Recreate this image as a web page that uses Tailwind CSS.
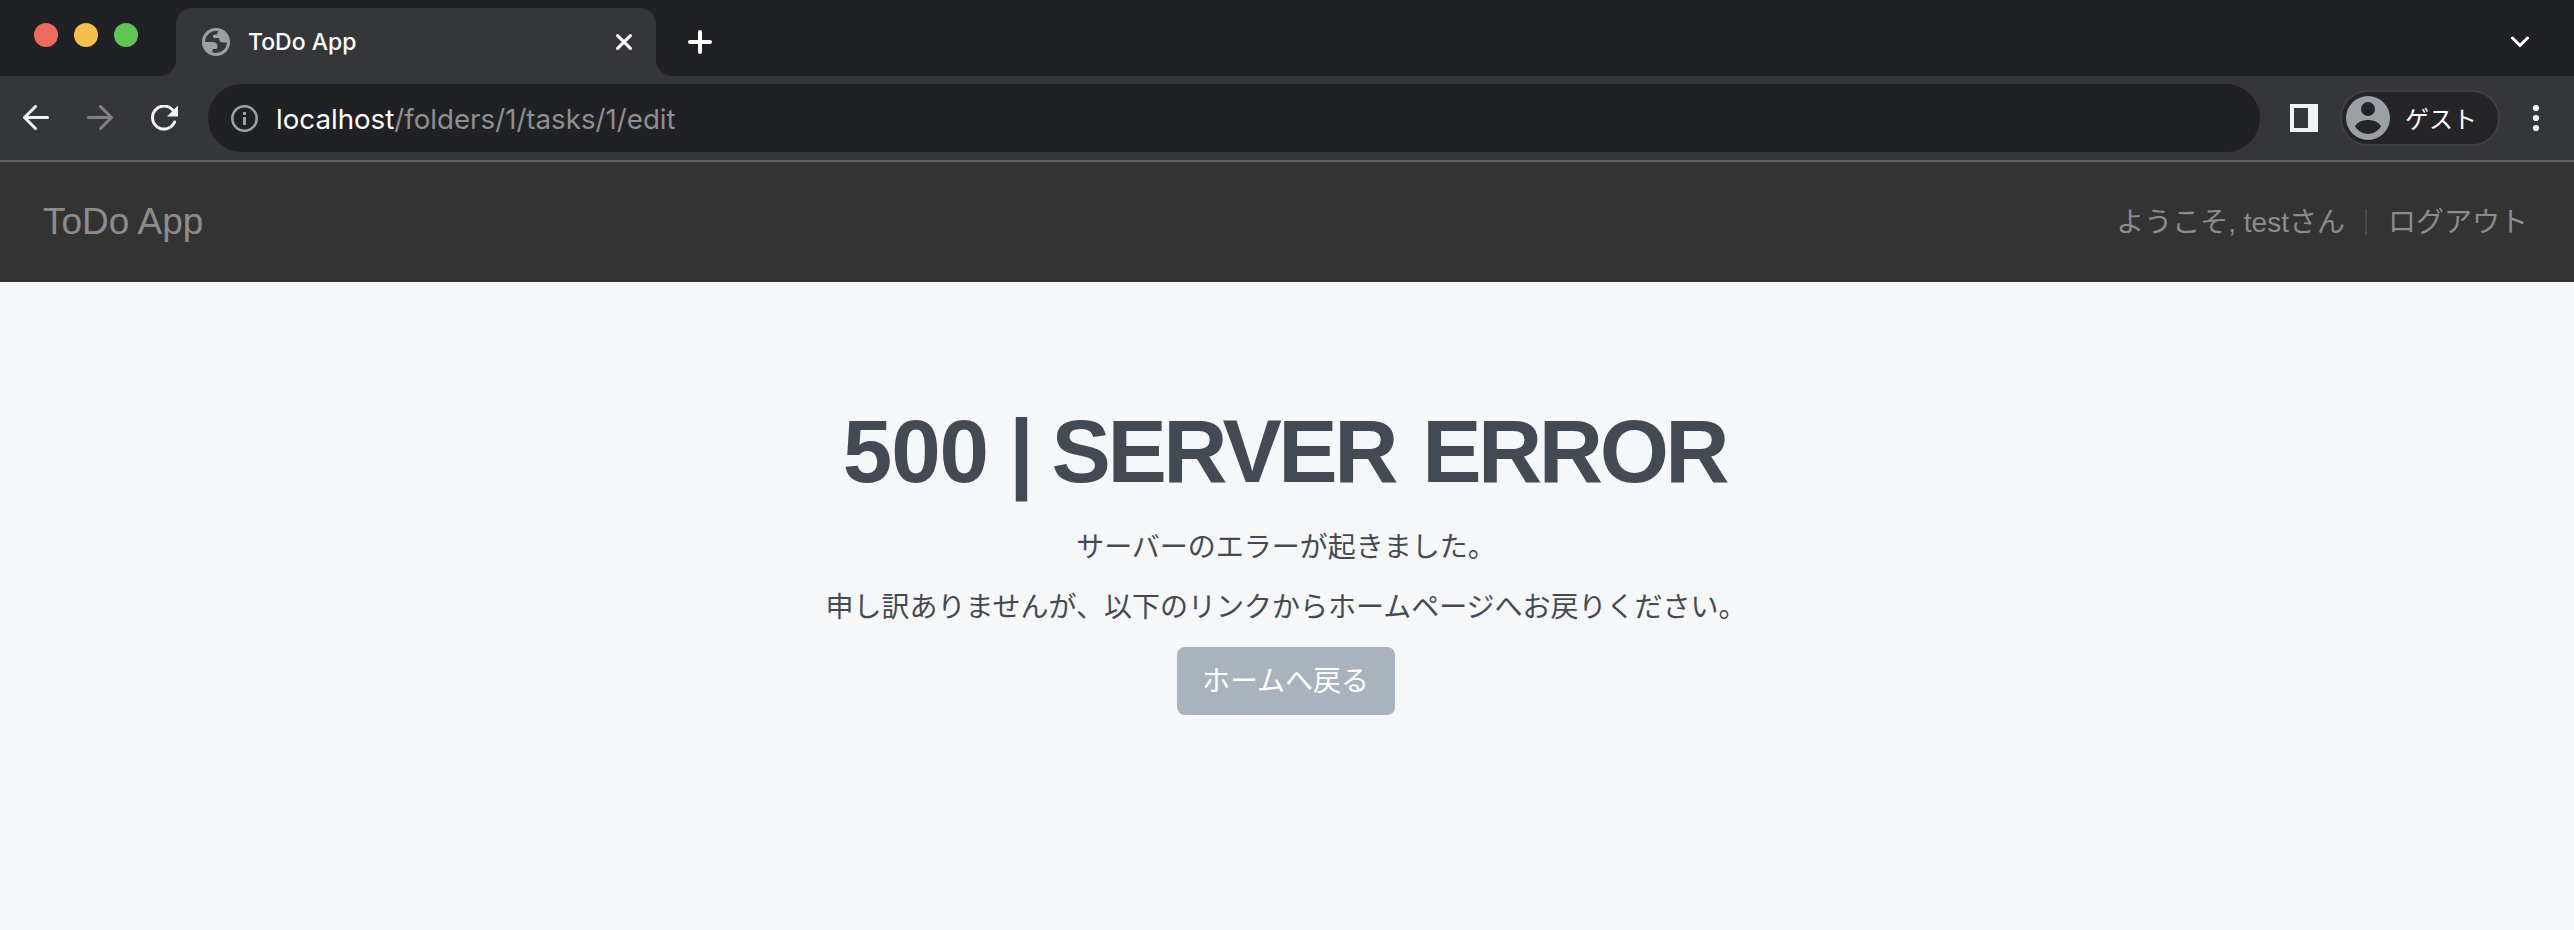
<!DOCTYPE html>
<html lang="ja">
<head>
<meta charset="utf-8">
<title>ToDo App</title>
<script src="https://cdn.jsdelivr.net/npm/@tailwindcss/browser@4"></script>
</head>
<body class="w-[2574px] h-[930px] overflow-hidden flex flex-col bg-[#f6f7f9] font-['Liberation_Sans','Noto_Sans_CJK_JP',sans-serif]">

<!-- Tab strip -->
<div class="h-[76px] shrink-0 flex items-end bg-[#202124] text-white">
  <div class="w-44 h-[76px] flex bg-[#35363a]">
    <div class="w-full h-full bg-[#202124] rounded-br-2xl flex gap-4 pl-[34px] pt-[23px]">
      <span class="size-6 rounded-full bg-[#ed6a5e]"></span>
      <span class="size-6 rounded-full bg-[#f5bf4f]"></span>
      <span class="size-6 rounded-full bg-[#61c554]"></span>
    </div>
  </div>
  <div class="w-[480px] h-[76px] bg-[#202124]">
    <div class="h-[68px] mt-2 rounded-t-2xl bg-[#35363a] flex items-center pl-[26px] pr-6">
      <svg class="size-7" viewBox="0 0 28 28"><circle cx="14" cy="14" r="14" fill="#9aa0a6"/><path fill="#35363a" d="M3 14A11 11 0 0 1 14 3l2.500.3c-1 .8-1.500 1.700-1.500 3.200h-2c-1.500 0-2 .8-2 2s.7 1.500 2 1.500h4c0 2.500 1 4 3 4.500h5A11 11 0 0 1 14 25c-1.300 0-2.500-.2-3.500-.5V21h3c1.500 0 2-1 2-2.500 0-3-1.500-4.500-5-4.500z"/></svg>
      <span class="ml-[18px] mb-px grow font-['Inter'] font-medium text-[23px] leading-7">ToDo App</span>
      <svg class="size-4" viewBox="0 0 16 16" stroke="#fff" stroke-width="3" stroke-linecap="round"><path d="M1.600 1.600 14.400 14.400M14.400 1.600 1.600 14.400"/></svg>
    </div>
  </div>
  <div class="grow h-[76px] bg-[#35363a]">
    <div class="h-full bg-[#202124] rounded-bl-2xl flex items-center justify-between pl-8 pr-[45px] pt-2">
      <svg class="size-6" viewBox="0 0 24 24" stroke="#fff" stroke-width="4" stroke-linecap="round"><path d="M2 12h20M12 2v20"/></svg>
      <svg class="w-[18px] h-3" viewBox="0 0 18 12" fill="none" stroke="#fff" stroke-width="3" stroke-linecap="round"><path d="m1.500 2 7.500 7.500L16.500 2"/></svg>
    </div>
  </div>
</div>

<!-- Toolbar -->
<div class="h-[86px] shrink-0 flex items-start pt-2 bg-[#35363a] border-b-2 border-[#5f5f66]">
  <div class="w-[208px] h-[68px] flex items-center pl-[23px]">
    <svg class="w-[26px] h-[26px]" viewBox="0 0 26 26" fill="none" stroke="#f1f3f4" stroke-width="3" stroke-linecap="round"><path d="M24.500 12.500H2M12.500 1.500 1.500 12.500 12.500 23.500"/></svg>
    <svg class="ml-[38px] w-[26px] h-[26px]" viewBox="0 0 26 26" fill="none" stroke="#808184" stroke-width="3" stroke-linecap="round"><path d="M1.500 12.500H24M13.500 1.500 24.500 12.500 13.500 23.500"/></svg>
    <svg class="ml-[38px] w-7 h-[26px]" viewBox="0 0 28 26" fill="none" stroke="#f1f3f4" stroke-width="3" stroke-linecap="round"><path d="M22.500 6.100A11.500 11.500 0 1 0 23.600 17"/><path d="M27 .5v11H16z" fill="#f1f3f4" stroke="none"/></svg>
  </div>
  <div class="w-[2052px] h-[68px] rounded-full bg-[#202124] flex items-center pl-[23px]">
    <svg class="size-[27px]" viewBox="0 0 27 27" fill="#9aa0a6"><circle cx="13.500" cy="13.500" r="12.200" fill="none" stroke="#9aa0a6" stroke-width="2.600"/><path d="M12 7h3v3h-3zM12 12h3v8h-3z"/></svg>
    <span class="ml-[18px] mt-px font-['Inter'] text-[27.700px] leading-8 text-[#8e8f91]"><span class="text-white">localhost</span>/folders/1/tasks/1/edit</span>
  </div>
  <div class="grow h-[68px] flex items-center pl-[30px]">
    <svg class="size-7" viewBox="0 0 28 28"><path fill="#f1f3f4" fill-rule="evenodd" d="M0 0h28v28H0zM4 4v20h14V4z"/></svg>
    <div class="ml-[22px] w-40 h-14 rounded-full border-2 border-[#3f4045] bg-[#242429] flex items-center pl-1">
      <svg class="size-11" viewBox="0 0 44 44"><circle cx="22" cy="22" r="22" fill="#9aa0a6"/><circle cx="22" cy="13" r="7" fill="#242429"/><path fill="#242429" d="M9 30.500C11 26 17 24 22 24s11 2 13 6.500C32 35 27 38 22 38s-10-3-13-7.500z"/></svg>
      <span class="ml-[15px] font-['Noto_Sans_CJK_JP'] text-[24px] leading-8 text-white">ゲスト</span>
    </div>
    <svg class="ml-[33px] w-[6px] h-[26px] overflow-visible" viewBox="0 0 6 26" fill="#f1f3f4"><circle cx="3" cy="3" r="3.100"/><circle cx="3" cy="13" r="3.100"/><circle cx="3" cy="23" r="3.100"/></svg>
  </div>
</div>

<!-- Site header -->
<header class="h-[120px] shrink-0 flex items-center justify-between bg-[#333] pl-[43px] pr-[46px] text-[#8c8c8c]">
  <a class="text-[37px] leading-10">ToDo App</a>
  <nav class="flex items-center text-[28px] leading-10">
    <span class="pt-0.5">ようこそ, testさん</span>
    <span class="ml-5 w-0.5 h-[26px] bg-[#434a54]"></span>
    <a class="ml-[21px] pt-0.5">ログアウト</a>
  </nav>
</header>

<!-- Error message -->
<main class="pt-[121px] pr-0.5 flex flex-col items-center text-center text-[28px] leading-10 text-[#434a54]">
  <h1 class="pr-[3px] text-[89px] leading-[96px] tracking-[-3.500px] font-bold"><span class="tracking-[-1.200px]">500</span> | <span class="[word-spacing:6px]">SERVER ERROR</span></h1>
  <p class="mt-[29px]">サーバーのエラーが起きました。</p>
  <p class="mt-5">申し訳ありませんが、以下のリンクからホームページへお戻りください。</p>
  <a class="mt-[19px] w-[218px] h-[68px] pt-px pr-px rounded-lg bg-[#aab2bd] text-white flex items-center justify-center">ホームへ戻る</a>
</main>
</body>
</html>
